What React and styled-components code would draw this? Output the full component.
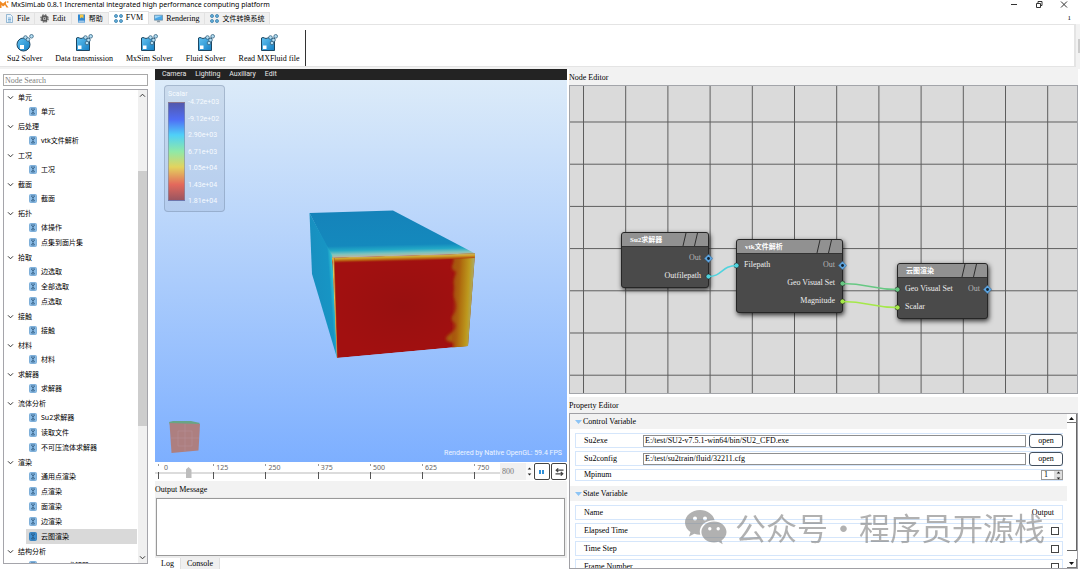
import React, { useState } from 'react';
import styled, { createGlobalStyle } from 'styled-components';

const SONG = "'Liberation Serif', 'Noto Sans CJK SC', serif";
const YAHEI = "'Noto Sans', 'Noto Sans CJK SC', sans-serif";
const VTK = "Roboto, 'Liberation Sans', sans-serif";

const GlobalStyle = createGlobalStyle`
  *, *::before, *::after { box-sizing: border-box; }
  html, body, #root { height: 100%; }
  body { margin: 0; background: #fff; color: #000; font: 8px/10px ${SONG}; overflow: hidden; }
  button, input, textarea { font: inherit; color: inherit; margin: 0; padding: 0; }
  button { background: none; border: 0; }
  svg { display: block; flex: none; }
`;

const Window = styled.div`
  display: flex;
  flex-direction: column;
  height: 100vh;
`;

/* ---- title bar ---- */
const TitleBar = styled.header`
  display: flex;
  align-items: center;
  height: 11px;
  padding-bottom: 2px;
  flex: none;
`;
const Title = styled.h1`
  margin: 0 auto 0 2px;
  font: 400 7px/8px ${YAHEI};
`;
const WindowButtons = styled.div`
  display: flex;
  gap: 17px;
  padding-right: 12px;
`;

/* ---- ribbon ---- */
const TabBar = styled.nav`
  display: flex;
  align-items: flex-end;
  height: 13px;
  flex: none;
  padding-right: 9px;
  font-size: 7px;
`;
const RibbonTab = styled.button`
  display: flex;
  align-items: center;
  justify-content: center;
  gap: 3px;
  height: ${p => (p.$active ? 13 : 12)}px;
  padding: 0 5px;
  background: ${p => (p.$active ? '#fff' : '#f0f0f0')};
  border: 1px solid #e2e2e2;
  border-width: 1px 1px 0 0;
  font-size: ${p => (p.$cjk ? 7 : 8)}px;
`;
const TabCount = styled.span`
  margin-left: auto;
  align-self: center;
`;
const RibbonRow = styled.div`
  display: flex;
  align-items: center;
  flex: none;
  background: #f2f2f2;
  padding-bottom: 2px;
`;
const Ribbon = styled.div`
  display: flex;
  flex: 1;
  gap: 13px;
  height: 43px;
  padding: 5px 0 0 7px;
  background: #fff;
  border: 1px solid #e4e4e4;
  border-width: 1px 2px 1px 0;
`;
const RibbonButton = styled.button`
  display: flex;
  flex-direction: column;
  align-items: center;
  justify-content: space-between;
  height: 34px;
  padding-top: 4px;
`;
const RibbonEnd = styled.div`
  width: 1px;
  margin-left: -7px;
  background: #333;
`;
const Grip = styled.div`
  width: 2px;
  height: 14px;
  margin-left: 2px;
  background: #ccc;
`;

/* ---- main area ---- */
const Main = styled.main`
  display: grid;
  grid-template-columns: 150px 412fr 509fr;
  column-gap: 2px;
  flex: 1;
  min-height: 0;
  padding: 0 2px 3px 3px;
`;
const Sidebar = styled.aside`
  display: flex;
  flex-direction: column;
  gap: 3px;
  min-height: 0;
  padding: 5px 5px 5px 0;
`;
const Search = styled.input`
  height: 12px;
  flex: none;
  padding: 0 1px;
  border: 1px solid #a8a8a8;
  outline: 0;
  &::placeholder { color: #808080; opacity: 1; }
`;
const TreeFrame = styled.div`
  display: flex;
  flex: 1;
  min-height: 0;
  border: 1px solid #a5a5ab;
`;
const Tree = styled.ul`
  flex: 1;
  margin: 0;
  padding: 0 1px 0 0;
  overflow: hidden;
  list-style: none;
  font: 7px/9px ${YAHEI};
`;
const SubTree = styled.ul`
  margin: 0;
  padding: 0 0 0 22px;
  list-style: none;
`;
const TreeRow = styled.div`
  display: flex;
  align-items: center;
  gap: 4px;
  height: ${p => (p.$leaf ? 15 : 14)}px;
  padding-left: 3px;
  background: ${p => (p.$selected ? '#d9d9d9' : 'transparent')};
`;
const TreeScroll = styled.div`
  display: flex;
  flex-direction: column;
  align-items: center;
  width: 9px;
  padding: 3px 0;
  background: #f0f0f0;
`;
const TreeThumb = styled.div`
  width: 9px;
  flex: 256;
  background: #cdcdcd;
`;
const Spacer = styled.div`
  flex: ${p => p.$grow || 1};
`;

/* ---- viewport ---- */
const Column = styled.section`
  display: flex;
  flex-direction: column;
  min-width: 0;
  min-height: 0;
`;
const ViewMenu = styled.nav`
  display: flex;
  gap: 9px;
  flex: none;
  height: 11px;
  padding-left: 7px;
  background: #232323;
  color: #e8e8e8;
  font: 7px/11px ${VTK};
`;
const Viewport = styled.div`
  position: relative;
  flex: 1;
  min-height: 0;
  background: linear-gradient(#dcebf9, #b9d5fb 38%, #7dafff);
  font-family: ${VTK};
  & > svg { width: 100%; height: 100%; }
`;
const Legend = styled.div`
  position: absolute;
  left: 9px;
  top: 5px;
  width: 61px;
  padding: 4px 3px 6px;
  background: rgba(150, 170, 195, 0.22);
  border: 1px solid rgba(110, 130, 160, 0.4);
  border-radius: 4px;
  color: #f7fbff;
  font-size: 7px;
  line-height: 8px;
`;
const LegendScale = styled.div`
  display: flex;
  gap: 3px;
`;
const ColorBar = styled.div`
  width: 17px;
  margin: 4px 0;
  border: 1px solid rgba(130, 140, 170, 0.6);
  background: linear-gradient(#5358ac, #4f6df5 17%, #4fd0f8 33%, #8fe9a8 50%, #e3d35e 66%, #e3695c 84%, #9a5560);
`;
const ScaleLabels = styled.div`
  display: flex;
  flex-direction: column;
  justify-content: space-between;
  height: 107px;
`;
const Fps = styled.div`
  position: absolute;
  right: 5px;
  bottom: 5px;
  color: #eef5ff;
  font-size: 7px;
  line-height: 8px;
`;

/* ---- time line ---- */
const TimeRow = styled.div`
  display: flex;
  align-items: stretch;
  flex: none;
  height: 19px;
  padding: 1px 0;
`;
const Timeline = styled.div`
  position: relative;
  display: flex;
  flex: 1;
  padding: 1px 3px 0;
  background: linear-gradient(#fff 9px, #dcdcdc 9px, #dcdcdc 11px, #fff 11px);
`;
const Tick = styled.div`
  flex: ${p => p.$span} 1 0;
  min-width: 0;
  padding-left: ${p => (p.$first ? 6 : 3)}px;
  background:
    linear-gradient(#999, #999) 0 0 / 1px 2px no-repeat,
    linear-gradient(#555, #555) 0 8px / 1px 7px no-repeat;
  color: #666;
  font: 7px/7px ${YAHEI};
`;
const TimeSlider = styled.input`
  position: absolute;
  inset: 4px 0 auto;
  width: 100%;
  height: 11px;
  appearance: none;
  background: none;
  &::-webkit-slider-thumb {
    appearance: none;
    width: 6px;
    height: 11px;
    background: #bdbdbd;
    clip-path: polygon(50% 0, 100% 25%, 100% 100%, 0 100%, 0 25%);
  }
`;
const SpinBox = styled.div`
  display: flex;
  align-items: center;
  width: ${p => (p.$small ? 22 : 33)}px;
  height: ${p => (p.$small ? '10px' : 'auto')};
  background: ${p => (p.$small ? '#fff' : '#f0f0f0')};
  border: ${p => (p.$small ? '1px solid #999' : '0')};
`;
const SpinInput = styled.input`
  flex: 1;
  min-width: 0;
  padding-left: 2px;
  border: 0;
  outline: 0;
  background: none;
  color: ${p => (p.disabled ? '#777' : '#000')};
`;
const SpinArrows = styled.span`
  display: flex;
  align-items: center;
  justify-content: center;
  align-self: stretch;
  width: ${p => (p.$flat ? 7 : 8)}px;
  background: ${p => (p.$flat ? '#fafafa' : '#dedede')};
`;
const PlayButton = styled.button`
  display: flex;
  align-items: center;
  justify-content: center;
  width: 16px;
  margin-left: 1px;
  border: 1px solid #444;
  border-radius: 2px;
`;

/* ---- dock panels ---- */
const DockTitle = styled.h2`
  flex: none;
  height: 16px;
  margin: 0;
  background: #f2f2f2;
  font: 400 8px/18px ${SONG};
`;
const OutputBox = styled.div`
  flex: none;
  padding: 1px 2px 2px 1px;
  background: #ececec;
`;
const OutputText = styled.textarea`
  display: block;
  width: 100%;
  height: 58px;
  border: 1px solid #999;
  outline: 0;
  resize: none;
`;
const BottomTabs = styled.div`
  display: flex;
  flex: none;
`;
const BottomTab = styled.button`
  height: 11px;
  padding: 0 6px;
  background: ${p => (p.$active ? '#fff' : '#f0f0f0')};
  border-right: 1px solid #e0e0e0;
`;

/* ---- node editor ---- */
const Canvas = styled.div`
  position: relative;
  flex: 2 1 0;
  min-height: 0;
  overflow: hidden;
  margin-bottom: 3px;
  border: 1px solid #a3a5aa;
  background: #dadada;
`;
const CanvasLayer = styled.svg`
  position: absolute;
  inset: 0;
  width: 100%;
  height: 100%;
`;
const NodeBox = styled.article`
  position: absolute;
  left: ${p => p.$x}px;
  top: ${p => p.$y}px;
  width: ${p => p.$w}px;
  border: 1px solid #262626;
  border-radius: 3px;
  background: #4a4a4a;
  box-shadow: 1px 2px 5px rgba(0, 0, 0, 0.8);
  color: #eee;
`;
const NodeHead = styled.header`
  display: flex;
  justify-content: space-between;
  height: 14px;
  padding-left: 8px;
  background: #919191;
  border-bottom: 1px solid #333;
  border-radius: 2px 2px 0 0;
  color: #fff;
  font: 700 7px/15px ${SONG};
`;
const NodeBody = styled.div`
  padding: 2px 0;
`;
const PortRow = styled.div`
  display: flex;
  align-items: center;
  justify-content: space-between;
  height: 18px;
  margin: 0 -5px;
`;
const Port = styled.span`
  display: flex;
  align-items: center;
  gap: 3px;
  color: ${p => (p.$dim ? '#b5b5b5' : '#eee')};
`;

/* ---- property editor ---- */
const PropertyFrame = styled.div`
  display: flex;
  flex: 1 1 0;
  min-height: 0;
  border: 1px solid #a0a0a5;
`;
const PropertyBody = styled.div`
  flex: 1;
  min-width: 0;
  overflow: hidden;
`;
const SectionHead = styled.button`
  display: flex;
  align-items: center;
  gap: 1px;
  width: 100%;
  height: 15px;
  padding-left: 5px;
  background: #f2f2f2;
`;
const Fields = styled.div`
  display: flex;
  flex-direction: column;
  gap: 3px;
  padding: 4px 4px 5px 5px;
`;
const Field = styled.div`
  display: flex;
  align-items: center;
  gap: 3px;
  height: ${p => (p.$short ? 12 : 15)}px;
  padding-left: 8px;
  border: 1px solid #d5e6fb;
  border-right: 0;
`;
const FieldLabel = styled.label`
  width: 56px;
  margin-right: auto;
`;
const PathInput = styled.input`
  flex: 1;
  min-width: 0;
  height: 12px;
  padding: 0 1px;
  border: 1px solid #8f8f8f;
  outline: 0;
`;
const OpenButton = styled.button`
  width: 34px;
  height: 14px;
  border: 1px solid #43505f;
  border-radius: 3px;
  background: #fff;
`;
const StateTable = styled.table`
  display: block;
  padding: 4px 4px 0 5px;
  & > tbody, & > thead { display: block; }
`;
const StateRow = styled.tr`
  display: flex;
  align-items: center;
  justify-content: space-between;
  height: 15px;
  margin-bottom: 3px;
  padding: 0 ${p => (p.$head ? 8 : 3)}px 0 8px;
  border: 1px solid #d5e6fb;
  & > * { padding: 0; font-weight: 400; }
`;
const Tickbox = styled.input`
  display: block;
  appearance: none;
  width: 8px;
  height: 8px;
  margin: 0;
  border: 1px solid #444;
  background: #fff;
`;
const ClassicScroll = styled.div`
  display: flex;
  flex-direction: column;
  width: 10px;
`;
const ClassicButton = styled.button`
  display: flex;
  align-items: center;
  justify-content: center;
  height: 9px;
  border: 1px solid #777;
  border-width: 0 1px 1px 0;
`;
const ClassicThumb = styled.div`
  flex: 126;
  border: 1px solid #666;
  border-width: 0 1px 1px 0;
`;
const Watermark = styled.div`
  position: fixed;
  right: 35px;
  bottom: 23px;
  display: flex;
  align-items: center;
  gap: 8px;
  color: rgba(125, 125, 125, 0.6);
  font: 400 31px/44px 'Noto Sans CJK SC', sans-serif;
  pointer-events: none;
`;
const WatermarkText = styled.span`
  display: flex;
`;
const Dot = styled.span`
  width: 31px;
  text-align: center;
`;

/* ---- icons ---- */
const Logo = () => (
  <svg width="9" height="9" viewBox="0 0 9 9">
    <path d="M0 1l3 2.5L6 1v3l2.500 3.500H6.500L5 5 3 6.500 1.500 5v3H0z" fill="#f08a24" />
    <circle cx="7.600" cy="2" r="1" fill="#f5a04a" />
  </svg>
);

const TAB_ICONS = {
  file: (
    <>
      <path d="M1.500.5h4L7.500 2.500v6h-6z" fill="#e9f3fb" stroke="#6f9fc4" strokeWidth=".7" />
      <path d="M3 4h3M3 5.500h3M3 7h3" stroke="#4e92c8" strokeWidth=".7" />
    </>
  ),
  gear: (
    <>
      <circle cx="4.500" cy="4.500" r="3.700" fill="none" stroke="#666" strokeWidth="1.200" strokeDasharray="1.700 1.200" />
      <circle cx="4.500" cy="4.500" r="2.400" fill="#ddd" stroke="#5a5a5a" strokeWidth="1.600" />
      <circle cx="4.500" cy="4.500" r=".9" fill="#555" />
    </>
  ),
  book: (
    <>
      <path d="M1 .5h7v8H1z" fill="#2f87d0" />
      <path d="M3 .5h3.500v4L4.800 3.300 3 4.500z" fill="#f3c84b" />
      <path d="M1.500 7.200h6" stroke="#fff" strokeWidth=".8" />
    </>
  ),
  dots: [[2, 2], [7, 2], [2, 7], [7, 7]].map(([x, y]) => (
    <circle key={`${x}${y}`} cx={x} cy={y} r="1.500" fill="#69b5e0" stroke="#246f9f" strokeWidth=".7" />
  )),
  screen: (
    <>
      <path d="M.4 1.200h8.200v5H.4z" fill="#4aa8e8" stroke="#657f92" strokeWidth=".6" />
      <path d="M1 1.700h7L1 4.500z" fill="#9dd5f8" />
      <path d="M3.500 6.500h2l.8 1.700H2.700z" fill="#8e9ba5" />
    </>
  ),
};

const TabIcon = ({ name }) => (
  <svg width="9" height="9" viewBox="0 0 9 9">{TAB_ICONS[name]}</svg>
);

const SolverIcon = ({ round }) => (
  <svg width="18" height="18" viewBox="0 0 18 18">
    <defs>
      <linearGradient id="solver" x1="0" y1="0" x2="1" y2="1">
        <stop offset="0" stopColor="#62c3f2" />
        <stop offset="1" stopColor="#157fc4" />
      </linearGradient>
    </defs>
    {round
      ? <circle cx="7.500" cy="10.500" r="6.500" fill="url(#solver)" stroke="#1d4763" />
      : <path d="M1.500 4q1.500-1 3 0t3 0 3 0 4 0v12.500h-13z" fill="url(#solver)" stroke="#1d4763" />}
    <path d={round ? 'M4 11h4v4H4z' : 'M3 11.500h3.500V15H3z'} fill="#fff" />
    {(round ? [[9.500, 3.500], [12, 5.500], [15.500, 2.300]] : [[10.500, 3.500], [12, 9], [13.500, 6], [15.700, 2.300]]).map(([x, y]) => (
      <circle key={`${x}-${y}`} cx={x} cy={y} r="1.800" fill="#b4def3" stroke="#33617f" strokeWidth=".8" />
    ))}
  </svg>
);

const LeafIcon = ({ selected }) => (
  <svg width="8" height="9" viewBox="0 0 8 9">
    <rect x=".5" y=".5" width="7" height="8" rx="1" fill={selected ? '#3d8ed0' : '#8bbce6'} stroke={selected ? '#3a84c0' : '#7fb0da'} />
    <path d="M2 2h4M2.500 2.500L4 4l1.500-1.500M4 4.500L2.500 7h3z" stroke="#204a70" strokeWidth=".7" fill="none" />
  </svg>
);

const Chevron = ({ up }) => (
  <svg width="7" height="5" viewBox="0 0 7 5">
    <path d={up ? 'M1 3.700l2.500-2.500L6 3.700' : 'M1 1.300l2.500 2.500L6 1.300'} fill="none" stroke="#333" />
  </svg>
);

const Triangle = ({ up, size = 5, color = '#111' }) => (
  <svg width={size} height={size === 5 ? 3 : 4} viewBox="0 0 6 3" preserveAspectRatio="none">
    <path d={up ? 'M3 0l3 3H0z' : 'M0 0h6L3 3z'} fill={color} />
  </svg>
);

const UpDown = () => (
  <svg width="5" height="9" viewBox="0 0 5 9">
    <path d="M2.500.5l1.800 2H.7zM2.500 8.500l1.800-2H.7z" fill="#222" />
  </svg>
);

const PortMark = ({ color }) => (
  <svg width="9" height="9" viewBox="0 0 9 9">
    {color
      ? <circle cx="4.500" cy="4.500" r="2.500" fill={color} stroke="#222" strokeWidth=".6" />
      : (
        <>
          <path d="M4.500.2l4.300 4.300-4.300 4.300L.2 4.500z" fill="#5ea5e0" stroke="#2c5478" strokeWidth=".4" />
          <circle cx="4.500" cy="4.500" r="1.400" fill="#10202e" />
        </>
      )}
  </svg>
);

const Slashes = () => (
  <svg width="26" height="13" viewBox="0 0 26 13">
    <path d="M1 13L4 0M12.500 13L15.500 0" stroke="#2d2d2d" />
  </svg>
);

const WeChat = () => (
  <svg width="42" height="35" viewBox="0 0 42 35">
    <path
      fill="currentColor"
      fillRule="evenodd"
      d="M15 0C6.700 0 0 5.600 0 12.500c0 3.900 2.200 7.300 5.500 9.600L4 26.500l5.300-2.700c1.900.6 3.800.9 6 .9a11 11 0 0 1-.5-3.200c0-6.300 6-11.300 13.500-11.300h1.300C28.200 4.300 22.200 0 15 0zM10 6.500a2 2 0 1 1 0 4 2 2 0 0 1 0-4zm10 0a2 2 0 1 1 0 4 2 2 0 0 1 0-4z"
    />
    <path
      fill="currentColor"
      fillRule="evenodd"
      d="M29 11.500c-7 0-12.600 4.700-12.600 10.500S22 32.500 29 32.500c1.600 0 3-.2 4.400-.7l4.300 2.400-1.200-3.800c3-1.900 5-4.900 5-8.400 0-5.800-5.600-10.500-12.500-10.500zM24.800 17a1.700 1.700 0 1 1 0 3.400 1.700 1.700 0 0 1 0-3.400zm8.400 0a1.700 1.700 0 1 1 0 3.400 1.700 1.700 0 0 1 0-3.400z"
    />
  </svg>
);

const Scene = () => (
  <svg viewBox="155 80 412 382" preserveAspectRatio="none">
    <defs>
      <linearGradient id="top" gradientUnits="userSpaceOnUse" x1="390" y1="210" x2="391" y2="256">
        <stop offset="0" stopColor="#1583ba" />
        <stop offset=".76" stopColor="#1489bd" />
        <stop offset=".86" stopColor="#22a9c6" />
        <stop offset=".94" stopColor="#7ec3bd" />
        <stop offset="1" stopColor="#b9b7a0" />
      </linearGradient>
      <linearGradient id="side" gradientUnits="userSpaceOnUse" x1="309" y1="290" x2="336" y2="288">
        <stop offset="0" stopColor="#188ebf" />
        <stop offset=".78" stopColor="#1795c4" />
        <stop offset=".93" stopColor="#2fc4d2" />
        <stop offset="1" stopColor="#a9c2ae" />
      </linearGradient>
      <linearGradient id="frontTop" gradientUnits="userSpaceOnUse" x1="400" y1="254" x2="400.200" y2="262">
        <stop offset="0" stopColor="#bdb9a4" />
        <stop offset=".4" stopColor="#cfa32a" />
        <stop offset=".7" stopColor="#b5500f" />
        <stop offset="1" stopColor="#a01010" stopOpacity="0" />
      </linearGradient>
      <linearGradient id="frontRight" gradientUnits="userSpaceOnUse" x1="452" y1="300" x2="473" y2="301">
        <stop offset="0" stopColor="#a83a10" stopOpacity="0" />
        <stop offset=".4" stopColor="#b0700f" />
        <stop offset=".75" stopColor="#bd9a1e" />
        <stop offset="1" stopColor="#a8ab70" />
      </linearGradient>
      <radialGradient id="core">
        <stop offset="0" stopColor="#981010" />
        <stop offset="1" stopColor="#a21010" />
      </radialGradient>
      <clipPath id="frontClip"><path d="M332 257.500L475 253.500 468 346 337 358z" /></clipPath>
      <filter id="soft"><feGaussianBlur stdDeviation="1.800" /></filter>
    </defs>
    <path d="M309.500 213L393 210.500 475 253.500 332 257.500z" fill="url(#top)" />
    <path d="M309.500 213L332.500 256 337 358 312 274z" fill="url(#side)" />
    <g clipPath="url(#frontClip)">
      <path d="M332 257.500L475 253.500 468 346 337 358z" fill="url(#core)" />
      <path
        d="M448 250q8 8 5 14t4 8q-4 8-3 12t0 8 2 10-2 12 1 9-4 10 0 9-6 13l34-2V250z"
        fill="#a8660f"
        opacity=".9"
        filter="url(#soft)"
      />
      <path d="M452 250h26v105h-26z" fill="url(#frontRight)" />
      <path d="M330 257.500L475 253.500v4.500L330 266z" fill="url(#frontTop)" />
      <path d="M334 258l3 100" stroke="#b5601a" strokeWidth="1" fill="none" />
      <path d="M333 257l3.500 101" stroke="#d8c060" strokeWidth="1.200" fill="none" />
    </g>
    <path d="M169 422l4-1h18l9 2-2 2h-28z" fill="#68a585" />
    <path d="M169.500 423L200 424l-1.500 26.500L171.500 453z" fill="#ad7f80" />
    <path d="M178 431h14v15h-14zM171 438h28M185 424v28" stroke="#b58c92" strokeWidth=".7" fill="none" />
  </svg>
);

/* ---- data ---- */
const RIBBON_TABS = [
  { icon: 'file', label: 'File' },
  { icon: 'gear', label: 'Edit' },
  { icon: 'book', label: '帮助', cjk: true },
  { icon: 'dots', label: 'FVM' },
  { icon: 'screen', label: 'Rendering' },
  { icon: 'dots', label: '文件转换系统', cjk: true },
];

const SOLVERS = ['Su2 Solver', 'Data transmission', 'MxSim Solver', 'Fluid Solver', 'Read MXFluid file'];

const TREE = [
  ['单元', ['单元']],
  ['后处理', ['vtk文件解析']],
  ['工况', ['工况']],
  ['截面', ['截面']],
  ['拓扑', ['体操作', '点集到面片集']],
  ['拾取', ['边选取', '全部选取', '点选取']],
  ['接触', ['接触']],
  ['材料', ['材料']],
  ['求解器', ['求解器']],
  ['流体分析', ['Su2求解器', '读取文件', '不可压流体求解器']],
  ['渲染', ['通用点渲染', '点渲染', '面渲染', '边渲染', '云图渲染']],
  ['结构分析', ['mecway求解器']],
];

const SCALE = ['-4.72e+03', '-9.12e+02', '2.90e+03', '6.71e+03', '1.05e+04', '1.43e+04', '1.81e+04'];
const TICKS = [0, 125, 250, 375, 500, 625, 750];

const NODES = [
  { title: 'Su2求解器', x: 51, y: 146, w: 88, rows: [{ out: 'Out' }, { out: 'Outfilepath', outColor: '#4fd3de' }] },
  {
    title: 'vtk文件解析', x: 166, y: 153, w: 107, rows: [
      { in: 'Filepath', inColor: '#4fd3de', out: 'Out' },
      { out: 'Geo Visual Set', outColor: '#67c883' },
      { out: 'Magnitude', outColor: '#a5e84a' },
    ],
  },
  {
    title: '云图渲染', x: 327, y: 177, w: 91, rows: [
      { in: 'Geo Visual Set', inColor: '#67c883', out: 'Out' },
      { in: 'Scalar', inColor: '#a5e84a' },
    ],
  },
];

const FlowNode = ({ node }) => (
  <NodeBox $x={node.x} $y={node.y} $w={node.w}>
    <NodeHead>{node.title}<Slashes /></NodeHead>
    <NodeBody>
      {node.rows.map((row, i) => (
        <PortRow key={i}>
          <Port>{row.in && <><PortMark color={row.inColor} />{row.in}</>}</Port>
          <Port $dim={!row.outColor}>{row.out && <>{row.out}<PortMark color={row.outColor} /></>}</Port>
        </PortRow>
      ))}
    </NodeBody>
  </NodeBox>
);

const PathField = ({ id, label, value }) => (
  <Field>
    <FieldLabel htmlFor={id}>{label}</FieldLabel>
    <PathInput id={id} defaultValue={value} />
    <OpenButton>open</OpenButton>
  </Field>
);

export default function App() {
  const [time, setTime] = useState(72);
  const [tab, setTab] = useState('FVM');
  const [selected, setSelected] = useState('云图渲染');

  return (
    <Window>
      <GlobalStyle />
      <TitleBar>
        <Logo />
        <Title>MxSimLab 0.8.1 Incremental integrated high performance computing platform</Title>
        <WindowButtons>
          <button aria-label="Minimize"><svg width="8" height="7"><path d="M1 3.500h6" stroke="#333" /></svg></button>
          <button aria-label="Restore">
            <svg width="8" height="7"><path d="M1.500 2.500h4v4h-4zM3 2V.5h4v4H6" fill="none" stroke="#333" /></svg>
          </button>
          <button aria-label="Close"><svg width="8" height="7"><path d="M1 .5l6 6M7 .5l-6 6" stroke="#333" /></svg></button>
        </WindowButtons>
      </TitleBar>

      <TabBar>
        {RIBBON_TABS.map(t => (
          <RibbonTab key={t.label} $active={t.label === tab} $cjk={t.cjk} onClick={() => setTab(t.label)}>
            <TabIcon name={t.icon} />{t.label}
          </RibbonTab>
        ))}
        <TabCount>1</TabCount>
      </TabBar>
      <RibbonRow>
        <Ribbon>
          {SOLVERS.map((s, i) => (
            <RibbonButton key={s}><SolverIcon round={i === 0} />{s}</RibbonButton>
          ))}
          <RibbonEnd />
        </Ribbon>
        <Grip />
      </RibbonRow>

      <Main>
        <Sidebar>
          <Search aria-label="Node Search" placeholder="Node Search" />
          <TreeFrame>
            <Tree>
              {TREE.map(([group, leaves]) => (
                <li key={group}>
                  <TreeRow><Chevron />{group}</TreeRow>
                  <SubTree>
                    {leaves.map(leaf => (
                      <li key={leaf}>
                        <TreeRow $leaf $selected={leaf === selected} onClick={() => setSelected(leaf)}>
                          <LeafIcon selected={leaf === selected} />{leaf}
                        </TreeRow>
                      </li>
                    ))}
                  </SubTree>
                </li>
              ))}
            </Tree>
            <TreeScroll>
              <Chevron up />
              <Spacer $grow={73} />
              <TreeThumb />
              <Spacer $grow={130} />
              <Chevron />
            </TreeScroll>
          </TreeFrame>
        </Sidebar>

        <Column>
          <ViewMenu>
            <span>Camera</span><span>Lighting</span><span>Auxiliary</span><span>Edit</span>
          </ViewMenu>
          <Viewport>
            <Scene />
            <Legend>
              Scalar
              <LegendScale>
                <ColorBar />
                <ScaleLabels>{SCALE.map(s => <span key={s}>{s}</span>)}</ScaleLabels>
              </LegendScale>
            </Legend>
            <Fps>Rendered by Native OpenGL: 59.4 FPS</Fps>
          </Viewport>
          <TimeRow>
            <Timeline>
              {TICKS.map(t => <Tick key={t} $first={t === 0} $span={t === 750 ? 50 : 125}>{t}</Tick>)}
              <TimeSlider
                type="range" aria-label="Frame" min="0" max="800"
                value={time} onChange={e => setTime(Number(e.target.value))}
              />
            </Timeline>
            <SpinBox>
              <SpinInput aria-label="Frames" disabled defaultValue="800" />
              <SpinArrows $flat><UpDown /></SpinArrows>
            </SpinBox>
            <PlayButton aria-label="Pause">
              <svg width="6" height="6"><path d="M0 1h2v4H0zM3 1h2v4H3z" fill="#2f8fd8" /></svg>
            </PlayButton>
            <PlayButton aria-label="Loop">
              <svg width="9" height="8" viewBox="0 0 9 8">
                <path d="M1 2.200h7.500M.5 5.800H8M3.200.4L1.200 2.200l2 1.800M5.800 4l2 1.800-2 1.800" fill="none" stroke="#444" strokeWidth="1.200" />
              </svg>
            </PlayButton>
          </TimeRow>
          <DockTitle>Output Message</DockTitle>
          <OutputBox><OutputText aria-label="Output Message" readOnly /></OutputBox>
          <BottomTabs>
            <BottomTab $active>Log</BottomTab>
            <BottomTab>Console</BottomTab>
          </BottomTabs>
        </Column>

        <Column>
          <DockTitle>Node Editor</DockTitle>
          <Canvas>
            <CanvasLayer>
              <defs>
                <pattern id="grid" x="13" y="35.500" width="42.200" height="42.200" patternUnits="userSpaceOnUse">
                  <path d="M.5 0v42.200M0 .5h42.200" stroke="#5c5c5c" />
                </pattern>
              </defs>
              <rect width="100%" height="100%" fill="url(#grid)" />
            </CanvasLayer>
            {NODES.map(n => <FlowNode key={n.title} node={n} />)}
            <CanvasLayer fill="none" strokeWidth="1.500" pointerEvents="none">
              <path d="M138 190.500c15 0 13-11 29-11" stroke="#4fd3de" />
              <path d="M272 197.500c28 0 28 6 56 6" stroke="#67c883" />
              <path d="M272 215.500c28 0 28 6 56 6" stroke="#a5e84a" />
            </CanvasLayer>
          </Canvas>
          <DockTitle>Property Editor</DockTitle>
          <PropertyFrame>
            <PropertyBody>
              <SectionHead><Triangle size={7} color="#8cc4f5" />Control Variable</SectionHead>
              <Fields>
                <PathField id="su2exe" label="Su2exe" value="E:/test/SU2-v7.5.1-win64/bin/SU2_CFD.exe" />
                <PathField id="su2config" label="Su2config" value="E:/test/su2train/fluid/32211.cfg" />
                <Field $short>
                  <FieldLabel htmlFor="mpinum">Mpinum</FieldLabel>
                  <SpinBox $small>
                    <SpinInput id="mpinum" defaultValue="1" />
                    <SpinArrows><UpDown /></SpinArrows>
                  </SpinBox>
                </Field>
              </Fields>
              <SectionHead><Triangle size={7} color="#8cc4f5" />State Variable</SectionHead>
              <StateTable>
                <thead><StateRow $head><th>Name</th><th>Output</th></StateRow></thead>
                <tbody>
                  {['Elapsed Time', 'Time Step', 'Frame Number'].map(name => (
                    <StateRow key={name}>
                      <td>{name}</td>
                      <td><Tickbox type="checkbox" aria-label={name} /></td>
                    </StateRow>
                  ))}
                </tbody>
              </StateTable>
            </PropertyBody>
            <ClassicScroll>
              <ClassicButton aria-label="Scroll up"><Triangle up /></ClassicButton>
              <ClassicThumb />
              <Spacer $grow={8} />
              <ClassicButton aria-label="Scroll down"><Triangle /></ClassicButton>
            </ClassicScroll>
          </PropertyFrame>
        </Column>
      </Main>

      <Watermark>
        <WeChat />
        <WatermarkText>公众号<Dot>·</Dot>程序员开源栈</WatermarkText>
      </Watermark>
    </Window>
  );
}
